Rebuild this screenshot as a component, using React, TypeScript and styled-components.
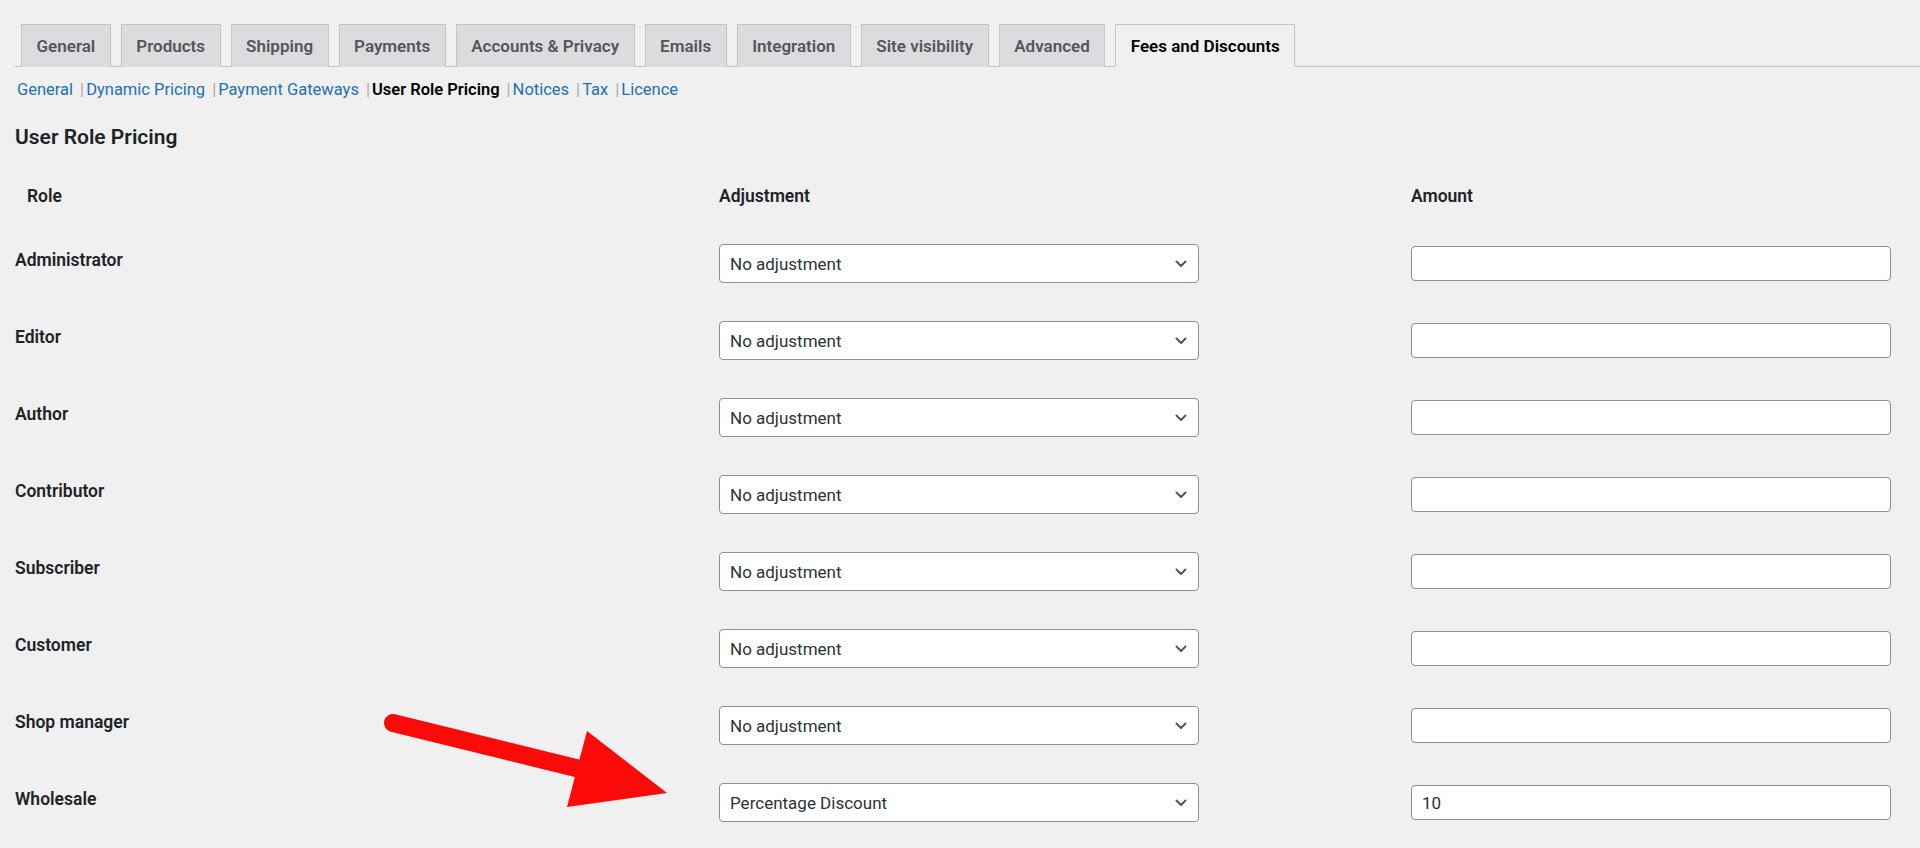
import React from "react"
import styled, { createGlobalStyle } from "styled-components"

const GlobalStyle = createGlobalStyle`
    html, body {
        margin: 0;
        padding: 0;
        background: #f0f0f1;
    }
    body {
        font-family: Roboto, "Liberation Sans", Arial, sans-serif;
        color: #1d2327;
    }
`

const tabs = [
    "General",
    "Products",
    "Shipping",
    "Payments",
    "Accounts & Privacy",
    "Emails",
    "Integration",
    "Site visibility",
    "Advanced",
    "Fees and Discounts",
]

const sections = [
    "General",
    "Dynamic Pricing",
    "Payment Gateways",
    "User Role Pricing",
    "Notices",
    "Tax",
    "Licence",
]

const roles = [
    { name: "Administrator", adjustment: "No adjustment", amount: "" },
    { name: "Editor", adjustment: "No adjustment", amount: "" },
    { name: "Author", adjustment: "No adjustment", amount: "" },
    { name: "Contributor", adjustment: "No adjustment", amount: "" },
    { name: "Subscriber", adjustment: "No adjustment", amount: "" },
    { name: "Customer", adjustment: "No adjustment", amount: "" },
    { name: "Shop manager", adjustment: "No adjustment", amount: "" },
    { name: "Wholesale", adjustment: "Percentage Discount", amount: "10" },
]

const Chevron = () => (
    <svg width="12" height="8" viewBox="0 0 12 8">
        <path d="M1.5 1.5 L6 6 L10.5 1.5" fill="none" stroke="#50575e" strokeWidth="2" strokeLinecap="round" strokeLinejoin="round" />
    </svg>
)

export default function App() {
    return (
        <Page>
            <GlobalStyle />
            <TabBar>
                {tabs.map((t) => (
                    <Tab key={t} $active={t === "Fees and Discounts"}>{t}</Tab>
                ))}
            </TabBar>

            <SubNav>
                {sections.map((s, i) => (
                    <li key={s}>
                        {i > 0 && <Sep>|</Sep>}
                        {s === "User Role Pricing" ? <Current>{s}</Current> : <a href="#">{s}</a>}
                    </li>
                ))}
            </SubNav>

            <Heading>User Role Pricing</Heading>

            <Table>
                <HeadCell $indent>Role</HeadCell>
                <HeadCell>Adjustment</HeadCell>
                <HeadCell>Amount</HeadCell>

                {roles.map((r) => (
                    <React.Fragment key={r.name}>
                        <RoleName>{r.name}</RoleName>
                        <SelectWrap>
                            <Select defaultValue={r.adjustment}>
                                <option>No adjustment</option>
                                <option>Percentage Discount</option>
                                <option>Fixed Discount</option>
                                <option>Percentage Increase</option>
                            </Select>
                            <ChevronSlot><Chevron /></ChevronSlot>
                        </SelectWrap>
                        <AmountCell>
                            <AmountInput type="text" defaultValue={r.amount} />
                        </AmountCell>
                    </React.Fragment>
                ))}
            </Table>

            <Annotation width="300" height="110" viewBox="0 0 300 110">
                <line x1="13" y1="13" x2="200" y2="59" stroke="#fb0a0a" strokeWidth="18" strokeLinecap="round" />
                <polygon points="207,21 287,83 187,97" fill="#fb0a0a" />
            </Annotation>
        </Page>
    )
}

const Page = styled.div`
    position: relative;
    min-height: 848px;
    padding: 24px 0 0 15px;
    box-sizing: border-box;
    overflow: hidden;
`

const TabBar = styled.nav`
    display: flex;
    gap: 10px;
    padding-left: 6px;
    height: 43px;
    border-bottom: 1px solid #c3c4c7;
    box-sizing: border-box;
    align-items: flex-end;
`

const Tab = styled.a<{ $active?: boolean }>`
    display: flex;
    align-items: center;
    height: 43px;
    margin-bottom: -1px;
    padding: 0 14.5px;
    box-sizing: border-box;
    border: 1px solid #c3c4c7;
    border-bottom: ${(p) => (p.$active ? "1px solid #f0f0f1" : "none")};
    background: ${(p) => (p.$active ? "#f0f0f1" : "#dcdcde")};
    color: ${(p) => (p.$active ? "#000" : "#50575e")};
    font-size: 17px;
    font-weight: 600;
    white-space: nowrap;
    cursor: pointer;
`

const SubNav = styled.ul`
    display: flex;
    list-style: none;
    margin: 13px 0 0 2px;
    padding: 0;
    font-size: 16.5px;
    line-height: 20px;

    li {
        display: flex;
        align-items: center;
    }

    a {
        color: #2271b1;
        text-decoration: none;
    }
`

const Sep = styled.span`
    color: #a7aaad;
    margin: 0 2px 0 7px;
`

const Current = styled.span`
    color: #000;
    font-weight: 600;
`

const Heading = styled.h2`
    margin: 24px 0 0;
    font-size: 21px;
    line-height: 26px;
    font-weight: 600;
    color: #1d2327;
`

const Table = styled.div`
    display: grid;
    grid-template-columns: 704px 692px 480px;
    grid-template-rows: 64px;
    grid-auto-rows: 77px;
    margin-top: 11px;
`

const HeadCell = styled.div<{ $indent?: boolean }>`
    padding-left: ${(p) => (p.$indent ? "12px" : "0")};
    padding-top: 24px;
    font-size: 17.5px;
    font-weight: 600;
    line-height: 22px;
    color: #1d2327;
`

const RoleName = styled.div`
    display: flex;
    align-items: center;
    margin-top: -7px;
    font-size: 17.5px;
    font-weight: 600;
    color: #1d2327;
`

const SelectWrap = styled.div`
    position: relative;
    align-self: center;
    width: 480px;
    height: 39px;
`

const Select = styled.select`
    appearance: none;
    width: 100%;
    height: 100%;
    padding: 0 32px 0 10px;
    border: 1px solid #8c8f94;
    border-radius: 4px;
    background: #fff;
    color: #2c3338;
    font-family: Roboto, "Liberation Sans", Arial, sans-serif;
    font-size: 17px;
    box-sizing: border-box;
    outline: none;
`

const ChevronSlot = styled.span`
    position: absolute;
    right: 12px;
    top: 50%;
    transform: translateY(-50%);
    display: flex;
    pointer-events: none;
`

const AmountCell = styled.div`
    display: flex;
    align-items: center;
`

const AmountInput = styled.input`
    width: 480px;
    height: 35px;
    padding: 0 10px;
    border: 1px solid #8c8f94;
    border-radius: 4px;
    background: #fff;
    color: #2c3338;
    font-family: Roboto, "Liberation Sans", Arial, sans-serif;
    font-size: 17px;
    box-sizing: border-box;
    outline: none;
`

const Annotation = styled.svg`
    position: absolute;
    left: 380px;
    top: 710px;
    pointer-events: none;
`
